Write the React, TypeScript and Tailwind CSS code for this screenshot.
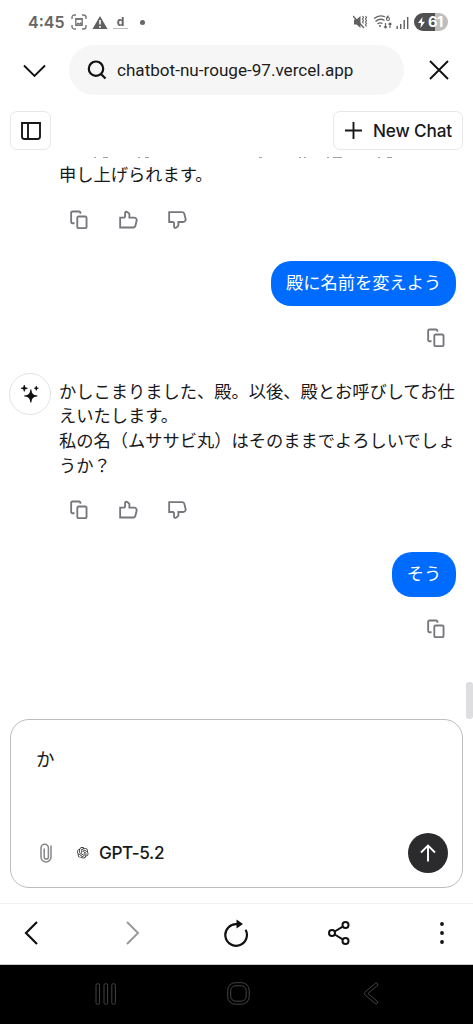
import React from "react";
import { SiOpenai } from "react-icons/si";

const copyPath =
  "M2.75 0.5C1.7835 0.5 1 1.2835 1 2.25V9.75C1 10.7165 1.7835 11.5 2.75 11.5H3.75H4.5V10H3.75H2.75C2.61193 10 2.5 9.88807 2.5 9.75V2.25C2.5 2.11193 2.61193 2 2.75 2H8.25C8.38807 2 8.5 2.11193 8.5 2.25V3H10V2.25C10 1.2835 9.2165 0.5 8.25 0.5H2.75ZM7.75 4.5C6.7835 4.5 6 5.2835 6 6.25V13.75C6 14.7165 6.7835 15.5 7.75 15.5H13.25C14.2165 15.5 15 14.7165 15 13.75V6.25C15 5.2835 14.2165 4.5 13.25 4.5H7.75ZM7.5 6.25C7.5 6.11193 7.61193 6 7.75 6H13.25C13.3881 6 13.5 6.11193 13.5 6.25V13.75C13.5 13.8881 13.3881 14 13.25 14H7.75C7.61193 14 7.5 13.8881 7.5 13.75V6.25Z";
const thumbPath =
  "M6.89531 2.23972C6.72984 2.12153 6.5 2.23981 6.5 2.44315V5.25001C6.5 6.21651 5.7165 7.00001 4.75 7.00001H2.5V13.5H12.1884C12.762 13.5 13.262 13.1096 13.4011 12.5532L14.4011 8.55318C14.5984 7.76425 14.0017 7.00001 13.1884 7.00001H9.25H8.5V6.25001V3.51458C8.5 3.43384 8.46101 3.35807 8.39531 3.31114L6.89531 2.23972ZM5 2.44315C5 1.01975 6.6089 0.191779 7.76717 1.01912L9.26717 2.09054C9.72706 2.41904 10 2.94941 10 3.51458V5.50001H13.1884C14.9775 5.50001 16.2903 7.18133 15.8563 8.91698L14.8563 12.917C14.5503 14.1412 13.4503 15 12.1884 15H1.75H1V14.25V6.25001V5.50001H1.75H4.75C4.88807 5.50001 5 5.38808 5 5.25001V2.44315Z";

function ActionIcon({ d, flip = false }: { d: string; flip?: boolean }) {
  return (
    <svg
      viewBox="0 0 16 16"
      fill="#76767d"
      fillRule="evenodd"
      className={flip ? "size-[19.7px] -scale-y-100" : "size-[19.7px]"}
    >
      <path d={d} />
    </svg>
  );
}

function AssistantActions() {
  return (
    <div className="flex h-5 items-center gap-[29.5px] pl-[69px]">
      <ActionIcon d={copyPath} />
      <ActionIcon d={thumbPath} />
      <ActionIcon d={thumbPath} flip />
    </div>
  );
}

function UserMessage({ text }: { text: string }) {
  return (
    <div className="flex flex-col items-end">
      <div className="mr-[17px] flex h-[44.5px] items-center rounded-[20px] bg-[#006cff] px-[14.8px] text-white">
        {text}
      </div>
      <div className="mt-[22.5px] mr-[27px] h-5">
        <ActionIcon d={copyPath} />
      </div>
    </div>
  );
}

function StatusBar() {
  return (
    <div className="flex h-[44px] items-center pl-[28px] text-[#666]">
      <span className="w-[36px] text-[16px] leading-5 font-semibold">4:45</span>
      <svg className="ml-[7px]" width="16" height="16" viewBox="0 0 16 16" fill="none" stroke="#777" strokeWidth="1.4">
        <path d="M1 5V3.500Q1 1 3.500 1H5M11 1h1.500Q15 1 15 3.500V5M15 11v1.500Q15 15 12.500 15H11M5 15H3.500Q1 15 1 12.500V11" />
        <path d="M4.800 4.800h6.400v6.400H4.800z" />
        <path d="M5 10.500l2-2 1.500 1 1.500-1.500 1 2.500z" fill="#666" stroke="none" />
        <path d="M5 5.300h6" />
      </svg>
      <svg className="ml-[5px]" width="16" height="15" viewBox="0 0 16 15">
        <path d="M8 1L15.500 14H.5z" fill="#606060" />
        <path d="M8 5v4.500M8 11v1.700" stroke="#fff" strokeWidth="1.600" />
      </svg>
      <span className="ml-[5px] flex h-[16px] w-[15px] flex-col items-center pt-px">
        <span className="text-[12px] leading-[13px] font-bold">d</span>
        <span className="h-px w-full bg-[#bbb]" />
      </span>
      <span className="ml-[12px] size-[5px] rounded-full bg-[#666]" />
      <svg className="ml-auto" width="14" height="14" viewBox="0 0 14 14" fill="none" stroke="#606060">
        <path d="M1 4.500h2.500L7.500 1v12L3.500 9.500H1z" fill="#606060" stroke="none" />
        <path d="M0 1l11 12" strokeWidth="1.300" />
        <path d="M9.500 1l1 1.500-1 1.500 1 1.500-1 1.500 1 1.500M12.500 1l1 1.500-1 1.500 1 1.500-1 1.500 1 1.500-1 1.500 1 1.500" strokeWidth="1.100" />
      </svg>
      <svg className="ml-[6px]" width="20" height="16" viewBox="0 0 20 16" fill="none" stroke="#666" strokeWidth="1.300">
        <path d="M1 4.500Q6.500 0 12 3M2.500 7.500Q7 3.500 11.500 6.500M4.500 10Q7 8 9.500 9.500" />
        <circle cx="7" cy="12" r="1" fill="#666" stroke="none" />
        <path d="M16 2Q13.500 2 13.500 5" strokeWidth="1.100" />
        <circle cx="15" cy="5" r="1.500" strokeWidth="1.100" />
        <path d="M12.500 9v5M11 12.500l1.500 1.500 1.500-1.500M17 14V9M15.500 10.500L17 9l1.500 1.500" strokeWidth="1.200" />
      </svg>
      <svg className="ml-[3px]" width="13" height="13" viewBox="0 0 13 13" stroke="#606060" strokeWidth="1.400">
        <path d="M1.200 13v-3M4.700 13V8M8.200 13V4M11.700 13V1" />
      </svg>
      <span className="mr-[25px] ml-[5px] flex h-[18px] w-[34px] items-center rounded-full bg-[linear-gradient(90deg,#505050_0_61%,#bebebe_61%)] pl-[4px] text-[14.5px] leading-none font-bold tracking-[-0.3px] text-white">
        <svg width="7" height="11" viewBox="0 0 7 11" fill="#fff" className="mr-[3px] shrink-0">
          <path d="M4.500 0L0 6h3L2.500 11 7 4.700H4z" />
        </svg>
        61
      </span>
    </div>
  );
}

function AddressBar() {
  return (
    <div className="flex h-[51px] items-center pl-[23px]">
      <svg className="mt-[2px]" width="23" height="14" viewBox="0 0 23 14" fill="none" stroke="#111" strokeWidth="1.900">
        <path d="M1 1.500L11.500 12 22 1.500" />
      </svg>
      <div className="ml-[23px] flex h-[50px] w-[335px] items-center rounded-full bg-[#f6f6f6] pl-[18px]">
        <svg width="20" height="20" viewBox="0 0 20 20" fill="none" stroke="#111" strokeWidth="2.200">
          <circle cx="9" cy="8.700" r="7.200" />
          <path d="M14 14l4.500 4.500" />
        </svg>
        <span className="ml-[10px] pt-[2px] font-[Roboto] text-[17.1px] whitespace-nowrap text-[#1c1c1c]">
          chatbot-nu-rouge-97.vercel.app
        </span>
      </div>
      <svg className="ml-[25px]" width="20" height="20" viewBox="0 0 20 20" fill="none" stroke="#111" strokeWidth="1.900">
        <path d="M1 1l18 18M19 1L1 19" />
      </svg>
    </div>
  );
}

function BrowserToolbar() {
  return (
    <div className="flex h-[62px] items-center border-t border-b border-t-[#f1f1f1] border-b-[#ccc] pb-[2px] pl-[24px]">
      <svg width="14" height="24" viewBox="0 0 14 24" fill="none" stroke="#111" strokeWidth="2.200">
        <path d="M13 1L2 12l11 11" />
      </svg>
      <svg className="ml-[88px]" width="14" height="24" viewBox="0 0 14 24" fill="none" stroke="#999" strokeWidth="2">
        <path d="M1 1l11 11L1 23" />
      </svg>
      <svg className="ml-[83px]" width="26" height="28" viewBox="0 0 26 28" fill="none" stroke="#111" strokeWidth="2.200">
        <path d="M14 5.200A10.800 10.800 0 1 0 22.600 10.800" />
        <path d="M13.500.5L20 5l-6.500 4.500z" fill="#111" stroke="none" />
      </svg>
      <svg className="ml-[79px]" width="22" height="24" viewBox="0 0 22 24" fill="none" stroke="#111" strokeWidth="2">
        <circle cx="4" cy="12" r="3" />
        <circle cx="17.500" cy="4" r="3" />
        <circle cx="17.500" cy="20" r="3" />
        <path d="M6.700 10.500l8-4.800M6.700 13.500l8 4.800" />
      </svg>
      <svg className="ml-[90px]" width="4" height="24" viewBox="0 0 4 24" fill="#111">
        <circle cx="2" cy="3" r="1.900" />
        <circle cx="2" cy="12" r="1.900" />
        <circle cx="2" cy="21" r="1.900" />
      </svg>
    </div>
  );
}

function SystemNav() {
  return (
    <div className="flex h-[59px] items-center bg-black pb-[2px] pl-[95px]">
      <svg width="22" height="22" viewBox="0 0 22 22" fill="none" stroke="#444">
        <rect x="1" y=".7" width="3.600" height="20.500" rx="1.500" />
        <rect x="9" y=".7" width="3.600" height="20.500" rx="1.500" />
        <rect x="16.800" y=".7" width="3.600" height="20.500" rx="1.500" />
      </svg>
      <svg className="ml-[110px]" width="23" height="23" viewBox="0 0 23 23" fill="none" stroke="#444">
        <rect x=".7" y=".7" width="21.500" height="21.500" rx="7.500" />
        <rect x="3.700" y="3.700" width="15.500" height="15.500" rx="5" />
      </svg>
      <svg className="ml-[113px]" width="16" height="23" viewBox="0 0 16 23" fill="none" stroke="#444">
        <path d="M13 .8L1.500 10.500Q.7 11.500 1.500 12.500L13 22.200Q14 22 15 20L5 11.500 15 3Q14.500 1 13 .8Z" />
      </svg>
    </div>
  );
}

export default function App() {
  return (
    <div className="flex h-[1024px] w-[473px] flex-col overflow-hidden bg-white font-[Inter,'Noto_Sans_CJK_JP',sans-serif] text-[#18181b]">
      <StatusBar />
      <AddressBar />

      <header className="flex h-[62px] shrink-0 items-start justify-between px-[10px] pt-[16px]">
        <button className="flex h-[39px] w-[41px] items-center justify-center rounded-[7px] border border-[#e6e6e8]">
          <svg width="20" height="18" viewBox="0 0 20 18" fill="none" stroke="#18181b" strokeWidth="1.900">
            <path d="M1 1h18v13.500q0 2.500-2.500 2.500h-13Q1 17 1 14.500zM7 1v16" />
          </svg>
        </button>
        <button className="flex h-[39px] w-[130px] items-center rounded-[7px] border border-[#e6e6e8] pl-[11px]">
          <svg width="17" height="17" viewBox="0 0 17 17" stroke="#18181b" strokeWidth="1.900">
            <path d="M8.500 0v17M0 8.500h17" />
          </svg>
          <span className="ml-[11px] text-[17.2px] font-medium tracking-[-0.15px] whitespace-nowrap">New Chat</span>
        </button>
      </header>

      <main className="relative h-[562px] shrink-0 overflow-hidden text-[17.25px] leading-[24.6px]">
        <svg className="block h-[6px] w-full" viewBox="0 0 473 6" stroke="#a0a0a0" strokeWidth="1" fill="none">
          <path d="M94 .5h2M103 .5h5M138 .5h2M145 .5h4M259 .5h3M299 .5h2M304 .5h2M327 .5h2M333 .5h9M378 .5h2M387 .5h5" />
        </svg>
        <p className="pl-[59px]">申し上げられます。</p>
        <div className="pt-[22px]">
          <AssistantActions />
        </div>
        <div className="pt-[31.9px]">
          <UserMessage text="殿に名前を変えよう" />
        </div>
        <div className="flex items-start pt-[25px] pl-[9px]">
          <div className="flex size-[41.500px] shrink-0 items-center justify-center rounded-full border border-[#e4e4e7]">
            <svg width="17.500" height="17.500" viewBox="0 0 16 16" fill="#111">
              <path d="M2.500.5V0h1v.5a2 2 0 0 0 2 2H6v1h-.5a2 2 0 0 0-2 2V6h-1v-.5a2 2 0 0 0-2-2H0v-1h.5a2 2 0 0 0 2-2Z" />
              <path d="M14.500 4.500V5h-1v-.5a1 1 0 0 0-1-1H12v-1h.5a1 1 0 0 0 1-1V1h1v.5a1 1 0 0 0 1 1h.5v1h-.5a1 1 0 0 0-1 1Z" />
              <path d="M8.407 4.929L8.500 4h1l.093.929a5 5 0 0 0 4.478 4.478L15 9.500v1l-.929.093a5 5 0 0 0-4.478 4.478L9.500 16h-1l-.093-.929a5 5 0 0 0-4.478-4.478L3 10.500v-1l.929-.093a5 5 0 0 0 4.478-4.478Z" />
            </svg>
          </div>
          <p className="mt-[6.3px] ml-[8.500px] whitespace-nowrap">
            かしこまりました、殿。以後、殿とお呼びしてお仕
            <br />
            えいたします。
            <br />
            私の名（ムササビ丸）はそのままでよろしいでしょ
            <br />
            うか？
          </p>
        </div>
        <div className="pt-[22px]">
          <AssistantActions />
        </div>
        <div className="pt-[32px]">
          <UserMessage text="そう" />
        </div>
        <div className="absolute top-[525px] right-0 h-[37px] w-[7px] rounded-[3px] bg-[#dedee0]" />
      </main>

      <section className="mx-[10px] flex h-[169px] shrink-0 flex-col justify-between rounded-[19px] border border-[#bdbdc0]">
        <p className="pt-[24px] pl-[25px] text-[18.5px] leading-[30px]">か</p>
        <div className="flex h-[68px] items-center pr-[14px] pl-[29px]">
          <svg width="12" height="20" viewBox="0 0 12 20" fill="none" stroke="#85858a" strokeWidth="1.500">
            <path d="M11 2.500v11.500a5 5 0 0 1-10 0V5a3.700 3.700 0 0 1 7.400 0v9a2.100 2.100 0 0 1-4.200 0V5.500" />
          </svg>
          <SiOpenai className="ml-[25px] size-[11.500px] text-[#222]" />
          <span className="ml-[10.500px] text-[17.2px] font-medium tracking-[-0.4px]">GPT-5.2</span>
          <button className="ml-auto flex size-[40px] items-center justify-center rounded-full bg-[#2b2b2e]">
            <svg width="16" height="18" viewBox="0 0 16 18" fill="none" stroke="#fff" strokeWidth="1.900">
              <path d="M8 17.500V1.500M1 8.500l7-7 7 7" />
            </svg>
          </button>
        </div>
      </section>

      <div className="h-[15px] shrink-0" />
      <BrowserToolbar />
      <SystemNav />
    </div>
  );
}
